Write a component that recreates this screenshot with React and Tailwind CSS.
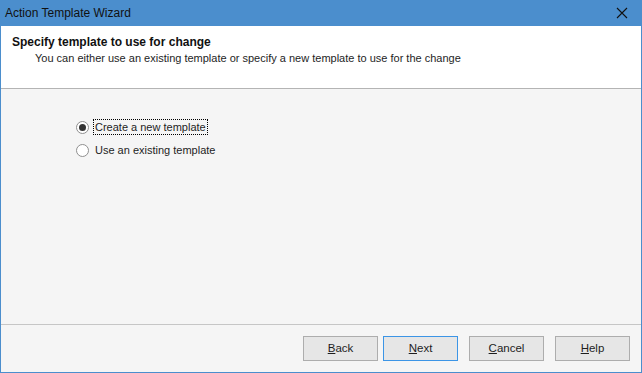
import React from "react";

const font = { fontFamily: '"Liberation Sans", Arial, sans-serif' };

function Radio({ checked, label, focused }) {
  return (
    <div className="flex items-center h-[16px]">
      <span className="w-[13px] h-[13px] rounded-full border border-[#8f8f8f] bg-white flex items-center justify-center">
        {checked && <span className="w-[7px] h-[7px] rounded-full bg-[#333333]" />}
      </span>
      <span
        className={
          "ml-[5px] px-[1px] leading-[14px] text-[11px] text-[#1e1e1e] " +
          (focused ? "outline outline-1 outline-dotted outline-black" : "")
        }
      >
        {label}
      </span>
    </div>
  );
}

function Btn({ children, primary, className }) {
  return (
    <button
      className={
        "w-[75px] h-[25px] text-[11.5px] text-[#1e1e1e] bg-[#e6e6e6] border " +
        (primary ? "border-[#3c95e6]" : "border-[#adadad]") +
        " " +
        (className || "")
      }
    >
      {children}
    </button>
  );
}

export default function App() {
  return (
    <div style={font} className="w-[642px] h-[373px] flex flex-col bg-[#f5f5f5] border-x border-b border-[#4b8ecd] overflow-hidden">
      {/* title bar */}
      <div className="h-[26px] -mx-px bg-[#4b8ecd] flex items-center justify-between pl-[5px] pr-[14px]">
        <span className="text-[12px] text-[#111111]">Action Template Wizard</span>
        <svg width="12" height="12" viewBox="0 0 12 12">
          <path d="M1 1L11 11M11 1L1 11" stroke="#111" strokeWidth="1.1" />
        </svg>
      </div>

      {/* header */}
      <div className="h-[63px] bg-white border-b border-[#b4b4b4] pl-[11px] pt-[9px]">
        <div className="text-[12px] font-bold text-[#111111] leading-[15px]">Specify template to use for change</div>
        <div className="text-[11px] text-[#1e1e1e] leading-[15px] pl-[23px] mt-[1px]">
          You can either use an existing template or specify a new template to use for the change
        </div>
      </div>

      {/* content */}
      <div className="flex-1 pl-[75px] pt-[30px] flex flex-col gap-[7px]">
        <Radio checked focused label="Create a new template" />
        <Radio label="Use an existing template" />
      </div>

      {/* footer */}
      <div className="h-[48px] border-t border-[#c6c6c6] flex items-start justify-end pt-[11px] pr-[11px]">
        <Btn>
          <u>B</u>ack
        </Btn>
        <Btn primary className="ml-[5px]">
          <u>N</u>ext
        </Btn>
        <Btn className="ml-[11px]">
          <u>C</u>ancel
        </Btn>
        <Btn className="ml-[11px]">
          <u>H</u>elp
        </Btn>
      </div>
    </div>
  );
}
